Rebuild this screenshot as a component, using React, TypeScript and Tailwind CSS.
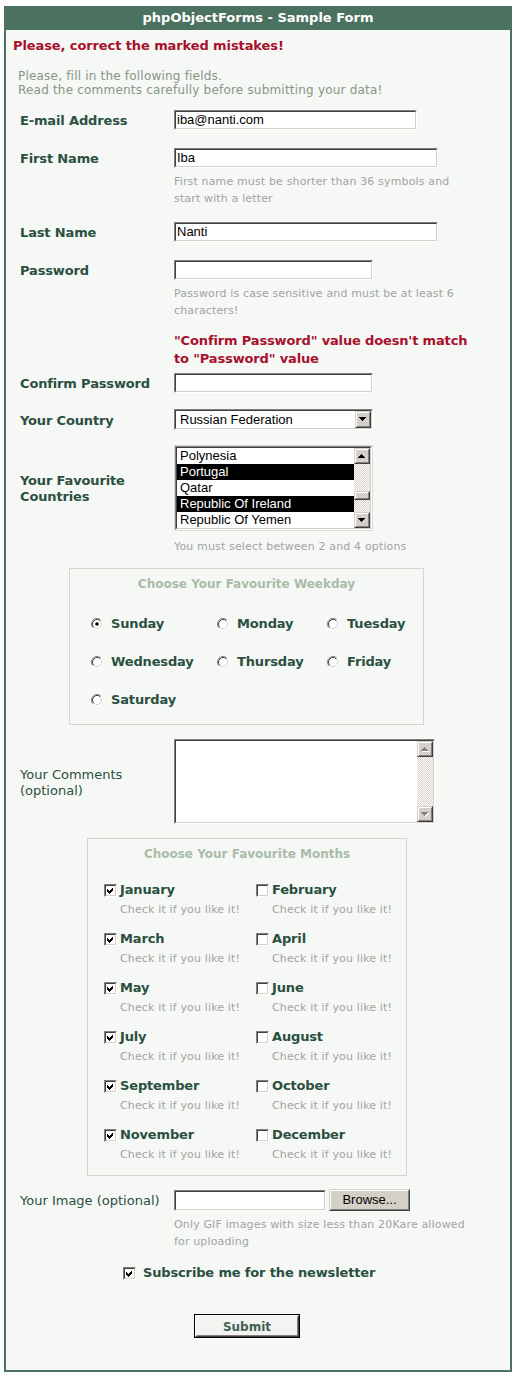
import React from "react";

const V = "font-['DejaVu_Sans',Verdana,sans-serif]";
const A = "font-['Liberation_Sans',Arial,sans-serif]";
const LABEL = "text-[13px] font-bold leading-[16px] tracking-[-0.15px] text-[#2b4f40]";
const BOLD18 = "whitespace-nowrap text-[13px] font-bold leading-[18px] tracking-[-0.15px] text-[#2b4f40]";
const HINT = "whitespace-nowrap text-[11px] leading-[17px] tracking-[0.15px] text-[#a3a3a3]";
const CHECKER =
  "bg-[image:repeating-conic-gradient(#d4d0c8_0%_25%,#ffffff_0%_50%)] bg-[length:2px_2px]";

type Kids = { className?: string; inner?: string; children?: React.ReactNode };

function Inset({ className = "", inner = "", children }: Kids) {
  return (
    <div
      className={`border border-t-[#808080] border-l-[#808080] border-r-white border-b-white ${className}`}
    >
      <div
        className={`h-full w-full border border-t-[#404040] border-l-[#404040] border-r-[#d4d0c8] border-b-[#d4d0c8] bg-white ${inner}`}
      >
        {children}
      </div>
    </div>
  );
}

function Raised({ className = "", inner = "", children }: Kids) {
  return (
    <div
      className={`border border-t-[#d4d0c8] border-l-[#d4d0c8] border-r-[#404040] border-b-[#404040] bg-[#d4d0c8] ${className}`}
    >
      <div
        className={`flex h-full w-full items-center justify-center border border-t-white border-l-white border-r-[#808080] border-b-[#808080] ${inner}`}
      >
        {children}
      </div>
    </div>
  );
}

function Tri({ dir, disabled = false }: { dir: "up" | "down"; disabled?: boolean }) {
  const rows = dir === "down" ? [0, 1, 2, 3] : [3, 2, 1, 0];
  const fill = disabled ? "#808080" : "#000000";
  return (
    <svg width="8" height="5" viewBox="0 0 8 5" shapeRendering="crispEdges">
      {disabled &&
        rows.map((r, i) => (
          <rect key={"s" + i} x={r + 1} y={i + 1} width={7 - 2 * r} height={1} fill="#ffffff" />
        ))}
      {rows.map((r, i) => (
        <rect key={i} x={r} y={i} width={7 - 2 * r} height={1} fill={fill} />
      ))}
    </svg>
  );
}

function ArrowBtn({ dir, disabled = false }: { dir: "up" | "down"; disabled?: boolean }) {
  return (
    <Raised className="h-[16px] w-[16px] shrink-0">
      <Tri dir={dir} disabled={disabled} />
    </Raised>
  );
}

function ScrollBar({
  className = "",
  disabled = false,
  thumb = false,
}: {
  className?: string;
  disabled?: boolean;
  thumb?: boolean;
}) {
  return (
    <div className={`flex w-[16px] shrink-0 flex-col ${className}`}>
      <ArrowBtn dir="up" disabled={disabled} />
      <div className={`relative flex-1 ${CHECKER}`}>
        {thumb && (
          <div className="absolute left-0 top-[27px] h-[9px] w-[16px] border border-t-[#d4d0c8] border-l-[#d4d0c8] border-r-[#404040] border-b-[#404040] bg-[#d4d0c8]">
            <div className="h-full w-full border border-t-white border-l-white border-r-[#808080] border-b-[#808080]" />
          </div>
        )}
      </div>
      <ArrowBtn dir="down" disabled={disabled} />
    </div>
  );
}

function Radio({ checked = false }: { checked?: boolean }) {
  return (
    <svg width="12" height="12" viewBox="0 0 12 12" className="shrink-0">
      <circle cx="6" cy="6" r="5" fill="#ffffff" />
      <path d="M2.11 9.89 A5.5 5.5 0 0 1 9.89 2.11" fill="none" stroke="#808080" strokeWidth="1" />
      <path d="M9.89 2.11 A5.5 5.5 0 0 1 2.11 9.89" fill="none" stroke="#ffffff" strokeWidth="1" />
      <path d="M2.82 9.18 A4.5 4.5 0 0 1 9.18 2.82" fill="none" stroke="#404040" strokeWidth="1" />
      <path d="M9.18 2.82 A4.5 4.5 0 0 1 2.82 9.18" fill="none" stroke="#d4d0c8" strokeWidth="1" />
      {checked && <circle cx="6" cy="6" r="1.8" fill="#000000" />}
    </svg>
  );
}

function Check({ checked = false }: { checked?: boolean }) {
  return (
    <div className="h-[13px] w-[13px] shrink-0 border border-t-[#808080] border-l-[#808080] border-r-white border-b-white">
      <div className="flex h-full w-full items-center justify-center border border-t-[#404040] border-l-[#404040] border-r-[#d4d0c8] border-b-[#d4d0c8] bg-white">
        {checked && (
          <svg width="9" height="9" viewBox="0 0 9 9" shapeRendering="crispEdges">
            <path d="M1 3 L3 5 L7 1 L7 4 L3 8 L1 6 Z" fill="#000000" />
          </svg>
        )}
      </div>
    </div>
  );
}

function FieldRow({
  label,
  bold = true,
  className = "",
  children,
}: {
  label: React.ReactNode;
  bold?: boolean;
  className?: string;
  children?: React.ReactNode;
}) {
  return (
    <div className={`flex items-center ${className}`}>
      <div
        className={`w-[168px] shrink-0 pl-[14px] pt-[2px] ${
          bold ? LABEL : "text-[13px] leading-[16px] text-[#2b4f40]"
        }`}
      >
        {label}
      </div>
      {children}
    </div>
  );
}

function TextBox({ w, h = "h-[20px]", value = "" }: { w: string; h?: string; value?: string }) {
  return (
    <Inset
      className={`${w} ${h} shrink-0`}
      inner={`flex items-center pl-[1px] ${A} text-[13px] leading-[16px] text-black`}
    >
      {value}
    </Inset>
  );
}

function Hint({ className = "", children }: { className?: string; children: React.ReactNode }) {
  return <div className={`ml-[168px] ${HINT} ${className}`}>{children}</div>;
}

const days = ["Sunday", "Monday", "Tuesday", "Wednesday", "Thursday", "Friday", "Saturday"];
const months = [
  ["January", true],
  ["February", false],
  ["March", true],
  ["April", false],
  ["May", true],
  ["June", false],
  ["July", true],
  ["August", false],
  ["September", true],
  ["October", false],
  ["November", true],
  ["December", false],
] as const;

const countries: [string, boolean][] = [
  ["Polynesia", false],
  ["Portugal", true],
  ["Qatar", false],
  ["Republic Of Ireland", true],
  ["Republic Of Yemen", false],
];

export default function App() {
  return (
    <div className={`min-h-[1386px] w-[519px] bg-white pl-[4px] pt-[6px] ${V}`}>
      <div className="w-[508px] border-2 border-[#4b7260] bg-[#f5f8f5] pb-[32px]">
        <div className="h-[22px] bg-[#4b7260] text-center text-[13px] font-bold leading-[20px] text-white">
          phpObjectForms - Sample Form
        </div>

        <div className="pl-[7px] pt-[8px] text-[13px] font-bold leading-[16px] tracking-[-0.1px] text-[#a8102c]">
          Please, correct the marked mistakes!
        </div>

        <div className="ml-[12px] mt-[15px] whitespace-nowrap text-[12px] leading-[14px] tracking-[0.2px] text-[#869686]">
          Please, fill in the following fields.
          <br />
          Read the comments carefully before submitting your data!
        </div>

        <FieldRow label="E-mail Address" className="mt-[13px]">
          <TextBox w="w-[243px]" value="iba@nanti.com" />
        </FieldRow>

        <FieldRow label="First Name" className="mt-[18px]">
          <TextBox w="w-[264px]" value="Iba" />
        </FieldRow>
        <Hint className="mt-[5px]">
          First name must be shorter than 36 symbols and
          <br />
          start with a letter
        </Hint>

        <FieldRow label="Last Name" className="mt-[15px]">
          <TextBox w="w-[264px]" value="Nanti" />
        </FieldRow>

        <FieldRow label="Password" className="mt-[18px]">
          <TextBox w="w-[199px]" />
        </FieldRow>
        <Hint className="mt-[5px]">
          Password is case sensitive and must be at least 6
          <br />
          characters!
        </Hint>

        <div className="ml-[168px] mt-[13px] whitespace-nowrap text-[13px] font-bold leading-[18px] tracking-[-0.15px] text-[#a8102c]">
          "Confirm Password" value doesn't match
          <br />
          to "Password" value
        </div>

        <FieldRow label="Confirm Password" className="mt-[5px]">
          <TextBox w="w-[199px]" />
        </FieldRow>

        <FieldRow label="Your Country" className="mt-[16px]">
          <Inset
            className="h-[21px] w-[199px] shrink-0"
            inner={`flex items-center justify-between ${A} text-[13px] leading-[16px] text-black`}
          >
            <span className="pl-[4px]">Russian Federation</span>
            <Raised className="h-[17px] w-[16px] shrink-0">
              <Tri dir="down" />
            </Raised>
          </Inset>
        </FieldRow>

        <FieldRow
          label={
            <>
              Your Favourite
              <br />
              Countries
            </>
          }
          className="mt-[15px]"
        >
          <div className="w-[199px] shrink-0 border border-[#dcdcd6]">
            <Inset className="h-[84px] w-full" inner="flex">
              <div className={`flex-1 ${A} text-[13px] leading-[16px]`}>
                {countries.map(([c, sel]) => (
                  <div
                    key={c}
                    className={`h-[16px] whitespace-nowrap pl-[3px] ${
                      sel ? "bg-black text-white" : "text-black"
                    }`}
                  >
                    {c}
                  </div>
                ))}
              </div>
              <ScrollBar className="h-[80px]" thumb />
            </Inset>
          </div>
        </FieldRow>
        <Hint className="mt-[7px]">You must select between 2 and 4 options</Hint>

        <div className="ml-[63px] mt-[13px] w-[355px] border border-[#d4d6d0] pb-[15px] pt-[7px]">
          <div className="text-center text-[12px] font-bold leading-[16px] text-[#a9bca9]">
            Choose Your Favourite Weekday
          </div>
          <div className="mt-[23px] grid grid-cols-[126px_110px_1fr] gap-y-[20px] pl-[21px]">
            {days.map((d) => (
              <div key={d} className="flex h-[18px] items-center">
                <Radio checked={d === "Sunday"} />
                <span className={`ml-[8px] ${BOLD18}`}>{d}</span>
              </div>
            ))}
          </div>
        </div>

        <FieldRow
          bold={false}
          label={
            <>
              Your Comments
              <br />
              (optional)
            </>
          }
          className="mt-[14px]"
        >
          <Inset className="h-[85px] w-[261px] shrink-0" inner="flex justify-end">
            <ScrollBar className="h-[81px]" disabled />
          </Inset>
        </FieldRow>

        <div className="ml-[81px] mt-[14px] w-[320px] border border-[#d4d6d0] pb-[12px] pt-[7px]">
          <div className="text-center text-[12px] font-bold leading-[16px] text-[#a9bca9]">
            Choose Your Favourite Months
          </div>
          <div className="mt-[19px] grid grid-cols-[152px_1fr] gap-y-[12px] pl-[16px]">
            {months.map(([m, c]) => (
              <div key={m}>
                <div className="flex h-[18px] items-center">
                  <Check checked={c} />
                  <span className={`ml-[3px] ${BOLD18}`}>{m}</span>
                </div>
                <div className={`mt-[2px] pl-[16px] ${HINT}`}>Check it if you like it!</div>
              </div>
            ))}
          </div>
        </div>

        <FieldRow bold={false} label="Your Image (optional)" className="mt-[13px] h-[22px]">
          <TextBox w="w-[152px]" h="h-[21px]" />
          <Raised
            className="ml-[3px] h-[22px] w-[81px] shrink-0"
            inner={`${A} text-[13px] leading-[16px] text-black`}
          >
            Browse...
          </Raised>
        </FieldRow>
        <Hint className="mt-[5px]">
          Only GIF images with size less than 20Kare allowed
          <br />
          for uploading
        </Hint>

        <div className="ml-[117px] mt-[14px] flex h-[18px] items-center">
          <Check checked />
          <span className={`ml-[7px] ${BOLD18}`}>Subscribe me for the newsletter</span>
        </div>

        <div className="ml-[188px] mt-[32px] h-[24px] w-[106px] border border-black">
          <div className="h-full w-full border border-t-white border-l-white border-r-[#404040] border-b-[#404040]">
            <div className="flex h-full w-full items-center justify-center border border-t-transparent border-l-transparent border-r-[#808080] border-b-[#808080] bg-[#f3f3f1] pt-[2px] text-[12px] font-bold leading-[16px] text-[#3f6152]">
              Submit
            </div>
          </div>
        </div>
      </div>
    </div>
  );
}
